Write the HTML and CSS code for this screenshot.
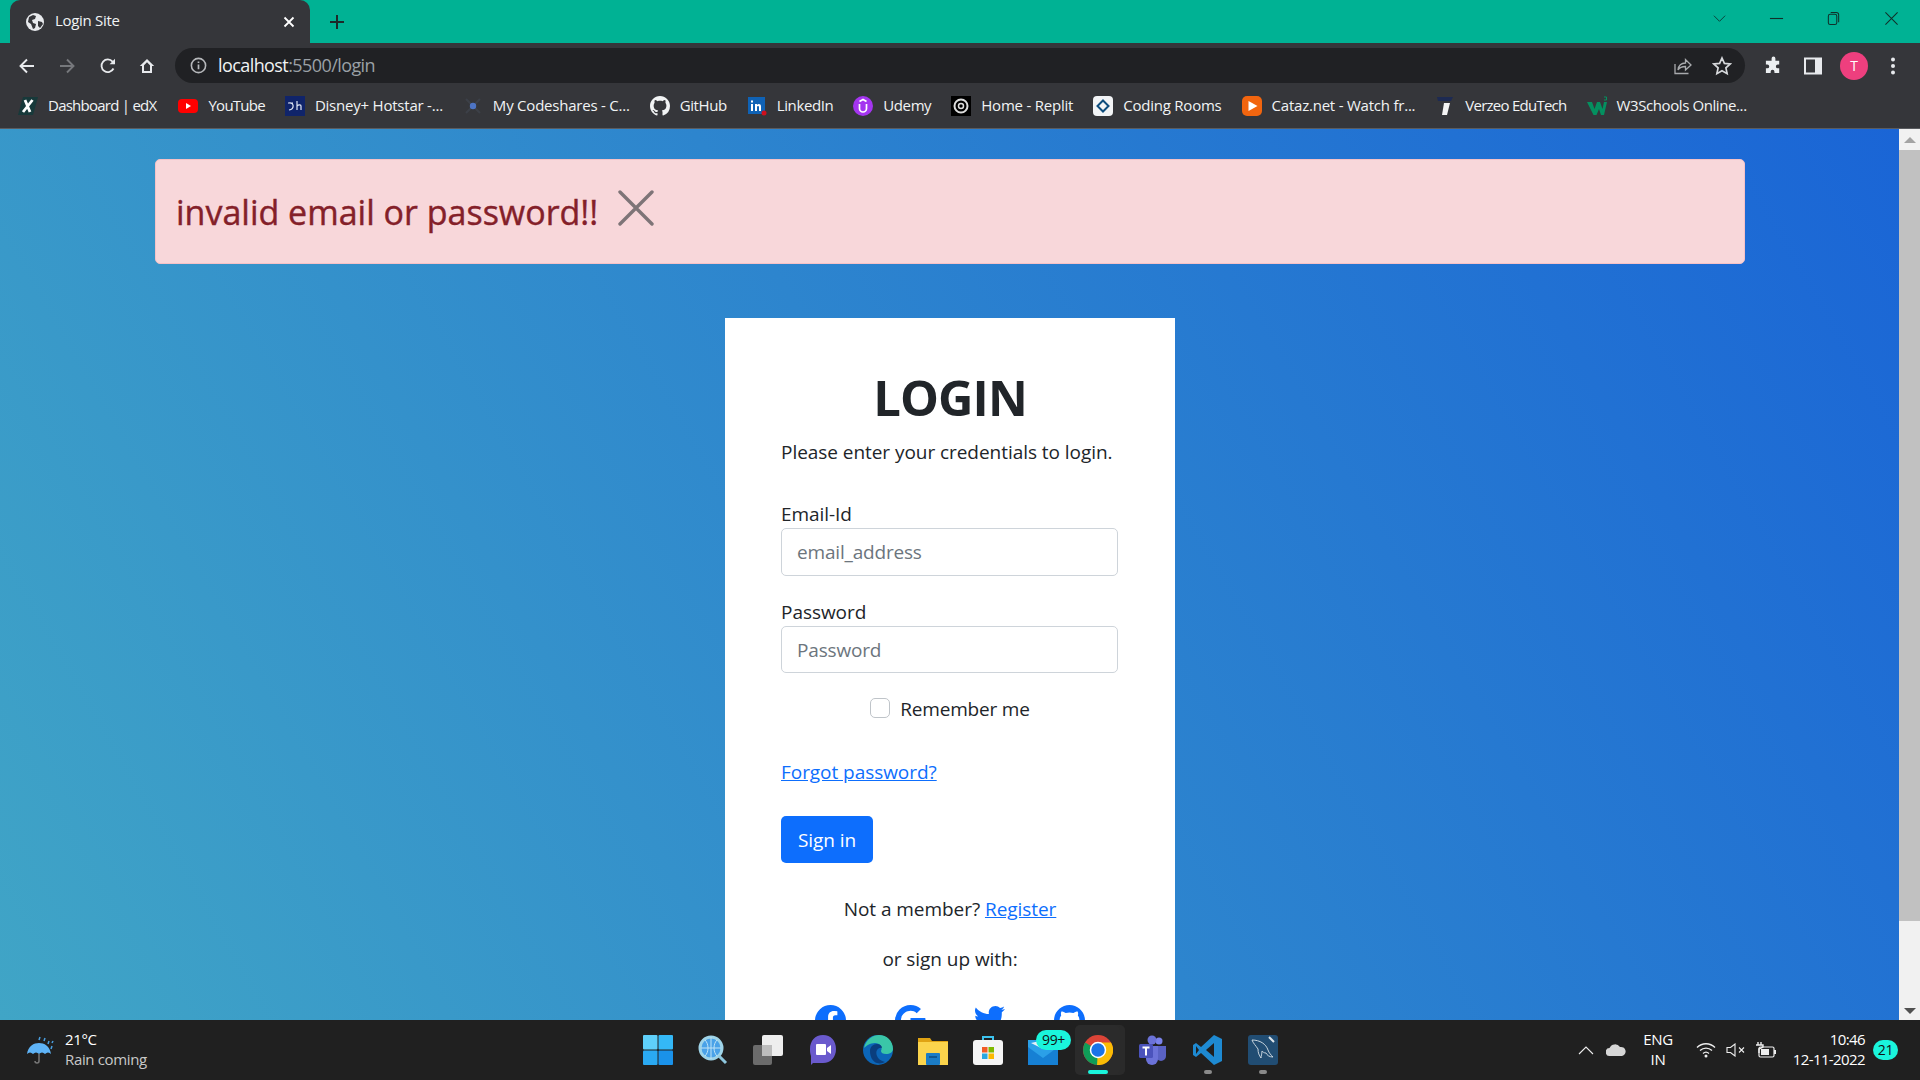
FILE: index.html
```html
<!DOCTYPE html>
<html lang="en">
<head>
<meta charset="utf-8">
<title>Login Site</title>
<link rel="stylesheet" href="styles.css">
</head>
<body>
<div class="window">
  <header class="tabstrip">
    <div class="tab">
      <svg class="fav" viewBox="0 0 20 20"><circle cx="10" cy="10" r="9" fill="#e8eaed"/><path d="M4 5l4-2 3 1-1 3-3 1 1 3 3 1-1 4-2 1-2-5-3-2zM13 9l4 1 1 2-3 4-2-2z" fill="#35363a"/></svg>
      <span class="tab-title">Login Site</span>
      <svg class="tab-x" viewBox="0 0 12 12"><path d="M1.5 1.5l9 9M10.5 1.5l-9 9" stroke="#fff" stroke-width="1.8"/></svg>
    </div>
    <svg class="newtab" viewBox="0 0 16 16"><path d="M8 1v14M1 8h14" stroke="#1d2a2a" stroke-width="2"/></svg>
    <div class="winctl">
      <svg viewBox="0 0 16 16"><path d="M2 5l6 6 6-6" fill="none" stroke="#0d3d35" stroke-width="1"/></svg>
      <svg viewBox="0 0 16 16"><path d="M1 8h14" stroke="#10302a" stroke-width="1.2"/></svg>
      <svg viewBox="0 0 16 16"><rect x="2.5" y="3.5" width="9" height="11" rx="2" fill="none" stroke="#10302a" stroke-width="1.1"/><path d="M5 1.5h6a2.5 2.5 0 0 1 2.5 2.5v8" fill="none" stroke="#10302a" stroke-width="1.1"/></svg>
      <svg viewBox="0 0 16 16"><path d="M1.5 1.5l13 13M14.5 1.5l-13 13" stroke="#10302a" stroke-width="1.1"/></svg>
    </div>
  </header>

  <nav class="toolbar">
    <div class="navbtn"><svg viewBox="0 0 18 18"><path d="M16 9H3M9 2.5L2.5 9 9 15.5" fill="none" stroke="#e8eaed" stroke-width="1.9"/></svg></div>
    <div class="navbtn"><svg viewBox="0 0 18 18"><path d="M2 9h13M9 2.5L15.500 9 9 15.500" fill="none" stroke="#76787c" stroke-width="1.9"/></svg></div>
    <div class="navbtn nudge"><svg viewBox="0 0 18 18"><path d="M14.500 11.500A6.300 6.300 0 1 1 13.600 4.600L15.500 6.500" fill="none" stroke="#e8eaed" stroke-width="1.800"/><path d="M16 1.800V7.200H10.600z" fill="#e8eaed"/></svg></div>
    <div class="navbtn"><svg viewBox="0 0 18 18"><path d="M9 2L1.800 9H4v7h10V9h2.200zM6 14V8.200l3-2.900 3 2.900V14z" fill="#e8eaed" fill-rule="evenodd"/></svg></div>
    <div class="omnibox">
      <svg class="info" viewBox="0 0 16 16"><circle cx="8" cy="8" r="6.700" fill="none" stroke="#b6b8bb" stroke-width="1.500"/><path d="M8 7v4.500M8 4.200v1.500" stroke="#b6b8bb" stroke-width="1.600"/></svg>
      <span class="url"><b>localhost</b>:5500/login</span>
      <svg class="omni-share" viewBox="0 0 20 20"><path d="M3 8v9.500h13.500" fill="none" stroke="#a8aaad" stroke-width="1.300"/><path d="M6 14c.6-4.600 3.600-7 7.500-7V3.500L19 9l-5.500 5v-3.500C10 10.500 7.500 11.500 6 14z" fill="none" stroke="#a8aaad" stroke-width="1.300"/></svg>
      <svg class="omni-star" viewBox="0 0 20 20"><path d="M10 2l2.400 5.400 5.800.6-4.300 3.900 1.200 5.800L10 14.800 4.900 17.700l1.200-5.800L1.800 8l5.800-.6z" fill="none" stroke="#d7d9dc" stroke-width="1.700"/></svg>
    </div>
    <div class="tools">
      <svg viewBox="0 0 20 20"><path d="M8 2.500a2 2 0 0 1 4 0V5h4v4h-1.500a2 2 0 0 0 0 4H16v5h-5v-1.500a2 2 0 0 0-4 0V18H2v-5h1.500a2 2 0 0 0 0-4H2V5h6z" fill="#eceff1" transform="translate(1 0) scale(.95)"/></svg>
      <svg viewBox="0 0 20 20"><rect x="1" y="1.500" width="18" height="17" fill="#e8eaed"/><rect x="3" y="3.500" width="9" height="13" fill="#35363a"/></svg>
      <span class="avatar">T</span>
      <svg viewBox="0 0 20 20"><circle cx="10" cy="3.500" r="2" fill="#e8eaed"/><circle cx="10" cy="10" r="2" fill="#e8eaed"/><circle cx="10" cy="16.500" r="2" fill="#e8eaed"/></svg>
    </div>
  </nav>

  <div class="bookmarks">
    <a class="bm bm-tight"><svg viewBox="0 0 20 20"><path d="M5 1h15l-5 18H0z" fill="#17393a"/><path d="M7 4l5 12M14.500 4L5 16" fill="none" stroke="#fff" stroke-width="2.800"/></svg><span>Dashboard | edX</span></a>
    <a class="bm bm-tight"><svg viewBox="0 0 20 20"><rect y="3" width="20" height="14" rx="4" fill="#f00"/><path d="M8 7l5 3-5 3z" fill="#fff"/></svg><span>YouTube</span></a>
    <a class="bm bm-wide"><svg viewBox="0 0 20 20"><rect width="20" height="20" fill="#10246a"/><path d="M3 7h5M4 7c5-1 6 6 0 7M12 5v9M12 10c2-2 4-1 4 0v4" fill="none" stroke="#dfe6f5" stroke-width="1.200"/></svg><span>Disney+ Hotstar -...</span></a>
    <a class="bm bm-wide"><svg viewBox="0 0 20 20"><path d="M3 3l14 14M17 3L3 17" stroke="#3c4048" stroke-width="2"/><circle cx="10" cy="10" r="3.200" fill="#4d74c4"/></svg><span>My Codeshares - C...</span></a>
    <a class="bm"><svg viewBox="0 0 16 16"><path d="M8 0C3.580 0 0 3.580 0 8c0 3.540 2.290 6.530 5.470 7.590.4.070.55-.17.55-.38 0-.19-.01-.82-.01-1.490-2.010.37-2.530-.49-2.690-.94-.09-.23-.48-.94-.82-1.130-.28-.15-.68-.52-.01-.53.63-.01 1.080.58 1.230.82.720 1.210 1.870.87 2.330.66.070-.52.280-.87.510-1.070-1.780-.2-3.640-.89-3.640-3.950 0-.87.310-1.590.820-2.150-.08-.2-.36-1.020.080-2.120 0 0 .67-.21 2.200.82.640-.18 1.320-.27 2-.27s1.360.09 2 .27c1.530-1.040 2.200-.82 2.200-.82.440 1.100.16 1.920.08 2.120.51.560.82 1.270.82 2.150 0 3.070-1.870 3.750-3.650 3.950.29.250.54.730.54 1.480 0 1.070-.01 1.930-.01 2.200 0 .21.150.46.550.38A8.010 8.010 0 0 0 16 8c0-4.420-3.580-8-8-8z" fill="#f1f3f4"/></svg><span>GitHub</span></a>
    <a class="bm"><svg viewBox="0 0 20 20"><rect x="1" y="1" width="17" height="17" fill="#0f62b5"/><path d="M4 8h2v7H4zM4 4.500h2v2H4zM8 8h2v1c1-1.500 4-1.500 4 1.500V15h-2v-4c0-1.500-2-1.500-2 0v4H8z" fill="#fff"/><circle cx="17" cy="17" r="2.500" fill="#d0101c"/></svg><span>LinkedIn</span></a>
    <a class="bm"><svg viewBox="0 0 20 20"><circle cx="10" cy="10" r="10" fill="#a435f0"/><path d="M6.500 8v4.500a3.500 3.500 0 0 0 7 0V8M6.500 5.500L10 3.500l3.500 2" fill="none" stroke="#fff" stroke-width="1.700"/></svg><span>Udemy</span></a>
    <a class="bm bm-wide"><svg viewBox="0 0 20 20"><rect width="20" height="20" fill="#000"/><circle cx="10" cy="10" r="6.500" fill="none" stroke="#ddd" stroke-width="2"/><circle cx="10" cy="10" r="2.500" fill="none" stroke="#ddd" stroke-width="1.500"/></svg><span>Home - Replit</span></a>
    <a class="bm bm-wide"><svg viewBox="0 0 20 20"><rect width="20" height="20" rx="4" fill="#f2f4f6"/><path d="M10 4.500l5.500 5.500-5.500 5.500L4.500 10z" fill="none" stroke="#0d4d7d" stroke-width="2"/></svg><span>Coding Rooms</span></a>
    <a class="bm bm-wide"><svg viewBox="0 0 20 20"><rect width="20" height="20" rx="5" fill="#f2650f"/><path d="M6.500 5l9 5-9 5z" fill="#fff"/></svg><span>Cataz.net - Watch fr...</span></a>
    <a class="bm bm-tight"><svg viewBox="0 0 20 20"><path d="M2 1h16l-2 4H3z" fill="#1d2a52"/><path d="M9 7h6l-3 12H7z" fill="#f4f4f4"/></svg><span>Verzeo EduTech</span></a>
    <a class="bm"><svg viewBox="0 0 20 20"><path d="M0 6h5l2.500 7L10 6h3l2.500 7L17 6h3l-3 13h-3l-2-6-2.500 6h-3z" fill="#04905f"/><path d="M17 1h2.500v3H17" fill="none" stroke="#04905f"/></svg><span>W3Schools Online...</span></a>
  </div>

  <div class="viewport">
    <main class="page">
      <div class="alert">
        <h3 class="alert-text">invalid email or password!!</h3>
        <svg class="alert-x" viewBox="0 0 36 36"><path d="M2 2l32 32M34 2L2 34" stroke="#7e7477" stroke-width="3.400" stroke-linecap="round"/></svg>
      </div>
      <section class="card">
        <h1 class="title">LOGIN</h1>
        <p class="lead">Please enter your credentials to login.</p>
        <label class="lbl lbl-first">Email-Id</label>
        <input class="field field-tall" type="text" placeholder="email_address">
        <label class="lbl lbl-next">Password</label>
        <input class="field" type="password" placeholder="Password">
        <div class="remember"><span class="check"></span><span class="remember-text">Remember me</span></div>
        <a class="link forgot" href="#">Forgot password?</a>
        <button class="signin" type="button">Sign in</button>
        <p class="center member">Not a member? <a class="link" href="#">Register</a></p>
        <p class="center orwith">or sign up with:</p>
        <div class="socials">
          <svg viewBox="0 0 32 32"><path d="M16 0a16 16 0 0 0-2.500 31.800V20.600H9.500V16h4v-3.500c0-4 2.400-6.200 6-6.200 1.800 0 3.600.3 3.600.3v3.900h-2c-2 0-2.600 1.200-2.600 2.500v3h4.400l-.7 4.600h-3.700v11.200A16 16 0 0 0 16 0z" fill="#0d6efd"/></svg>
          <svg viewBox="0 0 32 32"><path d="M31.500 16.500C31.500 25.500 25.300 32 16 32A16 16 0 1 1 16 0c4.300 0 8 1.600 10.800 4.200l-4.400 4.200C16.700 3 6.100 7.100 6.100 16c0 5.500 4.400 10 9.900 10 6.400 0 8.800-4.600 9.200-7H16v-5.500h15.200c.2.800.3 1.600.3 3z" fill="#0d6efd"/></svg>
          <svg viewBox="0 0 32 32"><path d="M28.700 9.500v.9c0 8.700-6.600 18.700-18.700 18.700-3.700 0-7.200-1.100-10-3 .5.100 1 .1 1.600.1 3.100 0 5.900-1 8.100-2.800-2.900-.1-5.300-2-6.100-4.600 1.400.2 2.300.2 3-.1-3-.6-5.300-3.300-5.300-6.500v-.1c.9.500 1.900.8 3 .8C2.500 11.600 1 9.300 1 6.800c0-1.200.3-2.300.9-3.300 3.200 4 8.100 6.600 13.500 6.900C14.400 5.800 17.800 2 22.100 2c1.900 0 3.600.8 4.800 2.100 1.500-.3 2.900-.8 4.200-1.600-.5 1.500-1.500 2.800-2.900 3.600 1.300-.2 2.600-.5 3.800-1-.9 1.300-2 2.500-3.300 3.400z" fill="#0d6efd" transform="translate(0 -1)"/></svg>
          <svg viewBox="0 0 16 16"><path d="M8 0C3.580 0 0 3.580 0 8c0 3.540 2.290 6.530 5.470 7.590.4.070.55-.17.55-.38 0-.19-.01-.82-.01-1.490-2.010.37-2.530-.49-2.690-.94-.09-.23-.48-.94-.82-1.130-.28-.15-.68-.52-.01-.53.63-.01 1.080.58 1.230.82.720 1.210 1.870.87 2.330.66.070-.52.280-.87.510-1.070-1.780-.2-3.640-.89-3.640-3.950 0-.87.310-1.590.820-2.150-.08-.2-.36-1.020.080-2.120 0 0 .67-.21 2.200.82.640-.18 1.320-.27 2-.27s1.360.09 2 .27c1.530-1.040 2.200-.82 2.200-.82.440 1.100.16 1.920.08 2.120.51.560.82 1.270.82 2.150 0 3.070-1.870 3.750-3.650 3.950.29.250.54.730.54 1.480 0 1.070-.01 1.930-.01 2.200 0 .21.150.46.550.38A8.010 8.010 0 0 0 16 8c0-4.420-3.580-8-8-8z" fill="#0d6efd"/></svg>
        </div>
      </section>
    </main>
    <aside class="scrollbar">
      <span class="arrow-up"></span>
      <div class="thumb"></div>
      <span class="arrow-down"></span>
    </aside>
  </div>

  <footer class="taskbar">
    <div class="weather">
      <svg viewBox="0 0 30 30"><path d="M1 19C2 11 8 8 13 8s11 3 12 11c-2-2-4-2-6 0-2-2-4-2-6 0-2-2-4-2-6 0-2-2-4-2-6 0z" fill="#5fb4f7"/><path d="M13 19v7a2 2 0 0 1-4 0" fill="none" stroke="#777" stroke-width="1.500"/><path d="M13 5l1-3M18 6l1-3M22 9l1-3M26 8l1-2M25 14l1-3" stroke="#4a9fe0" stroke-width="1.500"/></svg>
      <div class="weather-text"><span class="w-temp">21°C</span><span class="w-note">Rain coming</span></div>
    </div>
    <div class="apps">
      <div class="app"><svg viewBox="0 0 30 30"><rect x="0" y="0" width="14.500" height="14.500" rx="1" fill="#5fd0fa"/><rect x="15.500" y="0" width="14.500" height="14.500" rx="1" fill="#34b8f6"/><rect x="0" y="15.500" width="14.500" height="14.500" rx="1" fill="#2aa9f2"/><rect x="15.500" y="15.500" width="14.500" height="14.500" rx="1" fill="#1a92ea"/></svg></div>
      <div class="app"><svg viewBox="0 0 30 30"><circle cx="13" cy="13" r="11" fill="#4aa2e8" stroke="#9fd4e8" stroke-width="3"/><path d="M3 13h20M13 2v22M7 5c4 4 4 12 0 16M19 5c-4 4-4 12 0 16" fill="none" stroke="#bfe4f7" stroke-width="1"/><path d="M21 21l7 7" stroke="#8ec7de" stroke-width="3"/></svg></div>
      <div class="app"><svg viewBox="0 0 30 30"><rect x="0" y="10" width="19" height="20" rx="2" fill="#6b6b6b"/><rect x="9" y="0" width="21" height="21" rx="2" fill="#eeeeee"/><rect x="9" y="10" width="10" height="11" fill="#bdbdbd"/></svg></div>
      <div class="app"><svg viewBox="0 0 30 30"><path d="M15 0c8 0 13 6 13 14s-5 14-13 14H5l-2 2v-9C2 18 2 16 2 14 2 6 7 0 15 0z" fill="#6a5acd"/><rect x="8" y="9" width="10" height="11" rx="1" fill="#fff"/><path d="M19 13l4-3v9l-4-3z" fill="#fff"/></svg></div>
      <div class="app"><svg viewBox="0 0 30 30"><circle cx="15" cy="15" r="15" fill="#0c66b8"/><path d="M1 13C3 4 10 0 16 0c8 0 14 6 14 14 0 3-3 5-7 5-3 0-5-1-5-3 2-4-1-8-6-8-5 0-9 3-11 5z" fill="#3ac6a8"/><path d="M7 16c0-4 3-7 7-7 3 0 5 2 5 4-4-1-7 3-5 8 1 3 4 5 8 6-2 1-5 2-8 1-4-1-7-6-7-12z" fill="#0a3e7e"/></svg></div>
      <div class="app"><svg viewBox="0 0 30 30"><path d="M0 3h12l2 3h16v24H0z" fill="#e0a313"/><rect y="7" width="30" height="23" fill="#fbd44c"/><rect x="8" y="18" width="14" height="12" rx="1" fill="#1b7cc6"/><path d="M11 22h8" stroke="#0e4c80" stroke-width="1.500"/></svg></div>
      <div class="app"><svg viewBox="0 0 30 30"><path d="M10 6V2h10v4" fill="none" stroke="#3cc3ef" stroke-width="2"/><rect y="5" width="30" height="25" rx="3" fill="#f5f5f5"/><rect x="9" y="12" width="5.500" height="5.500" fill="#f15b25"/><rect x="15.500" y="12" width="5.500" height="5.500" fill="#7fba00"/><rect x="9" y="18.500" width="5.500" height="5.500" fill="#2aa7e0"/><rect x="15.500" y="18.500" width="5.500" height="5.500" fill="#fbb900"/></svg></div>
      <div class="app app-mail"><svg viewBox="0 0 30 30"><path d="M0 5h30v25H0z" fill="#2ba0e8"/><path d="M0 12l15 11 15-11v18H0z" fill="#1680d4"/><path d="M3 8l12 6L25 3z" fill="#e8f1f8"/></svg><span class="badge99">99+</span></div>
      <div class="app app-active"><svg viewBox="0 0 30 30"><circle cx="15" cy="15" r="15" fill="#db4437"/><path d="M15 15L2.100 7.500A15 15 0 0 0 15 30z" fill="#0f9d58"/><path d="M15 15l-1 15a15 15 0 0 0 14-22.500H15z" fill="#fbbc05"/><circle cx="15" cy="15" r="7.500" fill="#1a73e8" stroke="#fff" stroke-width="1.500"/></svg><span class="dot dot-on"></span></div>
      <div class="app"><svg viewBox="0 0 30 30"><circle cx="21" cy="6" r="3.500" fill="#7b83eb"/><circle cx="14" cy="5" r="4.500" fill="#6b72d8"/><path d="M17 11h11v10a5 5 0 0 1-10 0z" fill="#5a62c4"/><path d="M8 11h12v13a6 6 0 0 1-12 0z" fill="#6b72d8"/><rect x="1" y="9" width="14" height="14" rx="1.500" fill="#4b53bc"/><path d="M4.500 12.500h7M8 12.500v8" stroke="#fff" stroke-width="2"/></svg></div>
      <div class="app"><svg viewBox="0 0 30 30"><path d="M21 0l8 4v22l-8 4L8 18l-5 4-3-2v-10l3-2 5 4z" fill="#1e8ad2"/><path d="M21 8l-8 7 8 7z" fill="#202020"/><path d="M3 11l3 4-3 4z" fill="#202020"/></svg><span class="dot"></span></div>
      <div class="app"><svg viewBox="0 0 30 30"><rect width="30" height="30" rx="3" fill="#214d73"/><path d="M4 5c8 0 14 4 16 10 1 3 3 5 5 7-4 0-6-2-7-4-2 0-3-1-4-2 0 3-1 5-1 7-2-3-3-5-3-9C8 11 5 8 4 5z" fill="none" stroke="#c7d4de" stroke-width="1"/><path d="M21 2l5 5" stroke="#dfe6eb" stroke-width="2"/></svg><span class="dot"></span></div>
    </div>
    <div class="tray">
      <svg class="t-chev" viewBox="0 0 16 10"><path d="M1 9l7-7 7 7" fill="none" stroke="#eee" stroke-width="1.100"/></svg>
      <svg class="t-cloud" viewBox="0 0 20 12"><path d="M4 12a4 4 0 0 1-.5-8A6 6 0 0 1 14 3a4.500 4.500 0 0 1 2 9z" fill="#d6d6d6"/></svg>
      <div class="t-lang"><span>ENG</span><span>IN</span></div>
      <svg class="t-wifi" viewBox="0 0 20 16"><path d="M1 5.500c5-5 13-5 18 0M4 8.500c3.500-3.300 8.500-3.300 12 0M7 11.500c1.800-1.600 4.200-1.600 6 0" fill="none" stroke="#eee" stroke-width="1.300"/><circle cx="10" cy="14" r="1.500" fill="#eee"/></svg>
      <svg class="t-vol" viewBox="0 0 20 14"><path d="M1 4.500h3.500L9 1v12L4.500 9.500H1z" fill="none" stroke="#eee" stroke-width="1.100"/><path d="M13 4.500l5 5M18 4.500l-5 5" stroke="#eee" stroke-width="1.100"/></svg>
      <svg class="t-batt" viewBox="0 0 20 16"><rect x="3" y="5" width="15" height="10" rx="1.500" fill="none" stroke="#eee" stroke-width="1.200"/><rect x="5" y="7" width="8" height="6" fill="#eee"/><rect x="18" y="8" width="2" height="4" fill="#eee"/><path d="M2 0v3M5 0v3M0 3h7v2L3 7v4" fill="none" stroke="#eee" stroke-width="1.400"/></svg>
      <div class="t-clock"><span>10:46</span><span>12-11-2022</span></div>
      <span class="t-badge">21</span>
    </div>
  </footer>
</div>
</body>
</html>
```

FILE: styles.css
```css
* { box-sizing: border-box; }
html, body { margin: 0; height: 100%; overflow: hidden; }
body { font-family: "Open Sans", "Noto Sans", sans-serif; color: #212529; }
.window { height: 1080px; display: flex; flex-direction: column; }

.tabstrip { height: 43px; background: #00b294; display: flex; align-items: flex-end; flex: none; }
.tab { margin-left: 10px; width: 300px; height: 43px; background: #35363a; border-radius: 10px 10px 0 0; display: flex; align-items: center; padding: 0 15px; color: #f1f3f4; font-size: 15px; letter-spacing: -.3px; }
.fav { width: 20px; height: 20px; }
.tab-title { margin: -3px 0 0 10px; flex: 1; }
.tab-x { width: 12px; height: 12px; }
.newtab { width: 16px; height: 16px; margin: 0 0 13px 19px; }
.winctl { margin-left: auto; height: 43px; display: flex; align-items: center; }
.winctl svg { width: 15px; height: 15px; margin: -6px 21px 0; }
.winctl svg:last-child { margin-left: 22px; }

.toolbar { height: 40px; background: #35363a; display: flex; flex: none; padding: 5px 0 0 7px; }
.navbtn { width: 40px; height: 35px; flex: none; display: flex; align-items: center; justify-content: center; }
.navbtn svg { width: 18px; height: 18px; }
.nudge svg { margin-left: 2px; }
.omnibox { margin-left: 8px; width: 1570px; flex: none; height: 35px; background: #202124; border-radius: 18px; display: flex; align-items: center; padding: 0 13px 0 15px; }
.info { width: 17px; height: 17px; }
.url { margin: -2px 0 0 11px; font-size: 18px; letter-spacing: -.58px; color: #9aa0a6; flex: 1; }
.url b { font-weight: 400; color: #f1f3f4; }
.omni-share { width: 20px; height: 20px; }
.omni-star { width: 20px; height: 20px; margin-left: 20px; }
.tools { flex: 1; display: flex; align-items: center; height: 35px; padding-left: 18px; }
.tools svg { width: 20px; height: 20px; margin-right: 20px; flex: none; }
.tools svg:last-child { margin-right: 0; }
.avatar { width: 28px; height: 28px; flex: none; border-radius: 50%; background: #ee3f7e; color: #fff; font-size: 14px; display: flex; align-items: center; justify-content: center; margin-right: 15px; margin-left: -3px; }

.bookmarks { height: 46px; flex: none; background: #35363a; border-bottom: 1px solid #5a5c60; display: flex; align-items: center; padding-left: 18px; gap: 20px; }
.bm { display: flex; align-items: center; gap: 10px; color: #f1f3f4; font-size: 15px; letter-spacing: -.4px; white-space: nowrap; }
.bm:first-child { margin-right: 2px; }
.bm span { margin-top: -2px; }
.bm svg { width: 20px; height: 20px; flex: none; }
.bm-tight { letter-spacing: -.75px; }
.bm-wide { letter-spacing: -.22px; }

.viewport { flex: 1; min-height: 0; display: flex; overflow: hidden; }
.page { flex: 1; min-width: 0; background: linear-gradient(60deg, #40a5c6, #1a65d6); padding: 30px 154px 0 155px; overflow: hidden; }
.alert { height: 105px; background: #f8d7da; border: 1px solid #f5c2c7; border-radius: 5px; display: flex; align-items: center; padding-left: 20px; }
.alert-text { margin: 0; font-size: 34px; font-weight: 400; -webkit-text-stroke: .4px #842029; color: #842029; }
.alert-x { width: 36px; height: 36px; margin: -8px 0 0 20px; }

.card { width: 450px; margin: 54px auto 0; background: #fff; padding: 50px 56px 0; height: 760px; display: flex; flex-direction: column; font-size: 19px; letter-spacing: -.05px; }
.title { margin: -1px 0 1px; font-size: 49px; line-height: 60px; font-weight: 700; text-align: center; letter-spacing: -.9px; }
.lead { margin: 9px 0 -1px; line-height: 30px; }
.lbl { line-height: 30px; display: block; }
.lbl-first { margin-top: 33px; margin-bottom: -1px; }
.lbl-next { margin-top: 21px; margin-bottom: -1px; }
.field { height: 47px; width: 337px; flex: none; border: 1px solid #ced4da; border-radius: 5px; padding: 0 15px; font: inherit; letter-spacing: -.18px; color: #212529; background: #fff; outline: none; }
.field-tall { height: 48px; }
.field::placeholder { color: #6c757d; opacity: 1; }
.remember { margin-top: 20px; height: 30px; display: flex; align-items: center; justify-content: center; gap: 10px; }
.remember-text { letter-spacing: -.18px; padding-top: 2px; }
.check { width: 20px; height: 20px; border: 1px solid #bfc4c9; border-radius: 5px; background: #fff; }
.link { color: #0d6efd; text-decoration: underline; }
.forgot { margin-top: 34px; margin-bottom: -1px; line-height: 30px; align-self: flex-start; }
.signin { margin-top: 30px; width: 92px; height: 47px; flex: none; border: 0; border-radius: 5px; background: #0d6efd; color: #fff; font: inherit; letter-spacing: inherit; padding: 0; }
.center { margin: 0; text-align: center; line-height: 30px; }
.member { margin-top: 31px; margin-bottom: -1px; }
.orwith { margin-top: 21px; }
.socials { margin-top: 31px; display: flex; padding-left: 34px; gap: 48.500px; }
.socials svg { width: 31px; height: 31px; flex: none; }

.scrollbar { width: 21px; flex: none; background: #f1f1f1; display: flex; flex-direction: column; align-items: center; }
.arrow-up { margin-top: 8px; border: 6px solid transparent; border-top: 0; border-bottom: 6px solid #a3a3a3; }
.thumb { width: 100%; height: 771px; margin-top: 7px; background: #c1c1c1; }
.arrow-down { margin-top: 87px; border: 6px solid transparent; border-bottom: 0; border-top: 6px solid #505050; }

.taskbar { height: 60px; flex: none; background: #202020; display: flex; color: #fff; font-size: 15px; letter-spacing: -.35px; }
.weather { width: 630px; padding: 15px 0 0 26px; display: flex; gap: 9px; flex: none; }
.weather svg { width: 30px; height: 30px; }
.weather-text { display: flex; flex-direction: column; line-height: 20px; margin-top: -6px; }
.w-note { color: #c8c8c8; }
.apps { display: flex; flex: none; }
.app { width: 55px; height: 60px; display: flex; align-items: center; justify-content: center; position: relative; }
.app svg { width: 30px; height: 30px; }
.app-active { background: #2b2b2b; margin: 5px; width: 45px; height: 50px; border-radius: 5px; box-shadow: 5px 0 0 #2a2a2a; }
.dot { position: absolute; left: 50%; bottom: 6px; width: 8px; height: 4px; margin-left: -4px; border-radius: 2px; background: #8a8a8a; }
.dot-on { width: 20px; margin-left: -10px; bottom: 1px; background: #1af5dc; }
.badge99 { position: absolute; left: 21px; top: 10px; height: 20px; padding: 0 6px; border-radius: 12px; background: #1af5dc; color: #111; font-size: 14px; line-height: 20px; }
.tray { flex: 1; display: flex; align-items: center; }
.t-chev { width: 16px; height: 10px; margin-left: 288px; }
.t-cloud { width: 20px; height: 12px; margin-left: 12px; }
.t-lang { width: 60px; margin: -2px 0 0 2px; display: flex; flex-direction: column; align-items: center; line-height: 20px; }
.t-wifi { width: 20px; height: 16px; margin-left: 8px; }
.t-vol { width: 20px; height: 14px; margin-left: 10px; }
.t-batt { width: 20px; height: 16px; margin-left: 10px; }
.t-clock { margin: -2px 0 0 auto; display: flex; flex-direction: column; align-items: flex-end; line-height: 20px; letter-spacing: -.6px; }
.t-badge { width: 25px; height: 20px; margin: 0 22px 0 8px; border-radius: 10px; background: #1af5dc; color: #111; font-size: 14px; text-align: center; line-height: 20px; }
```
